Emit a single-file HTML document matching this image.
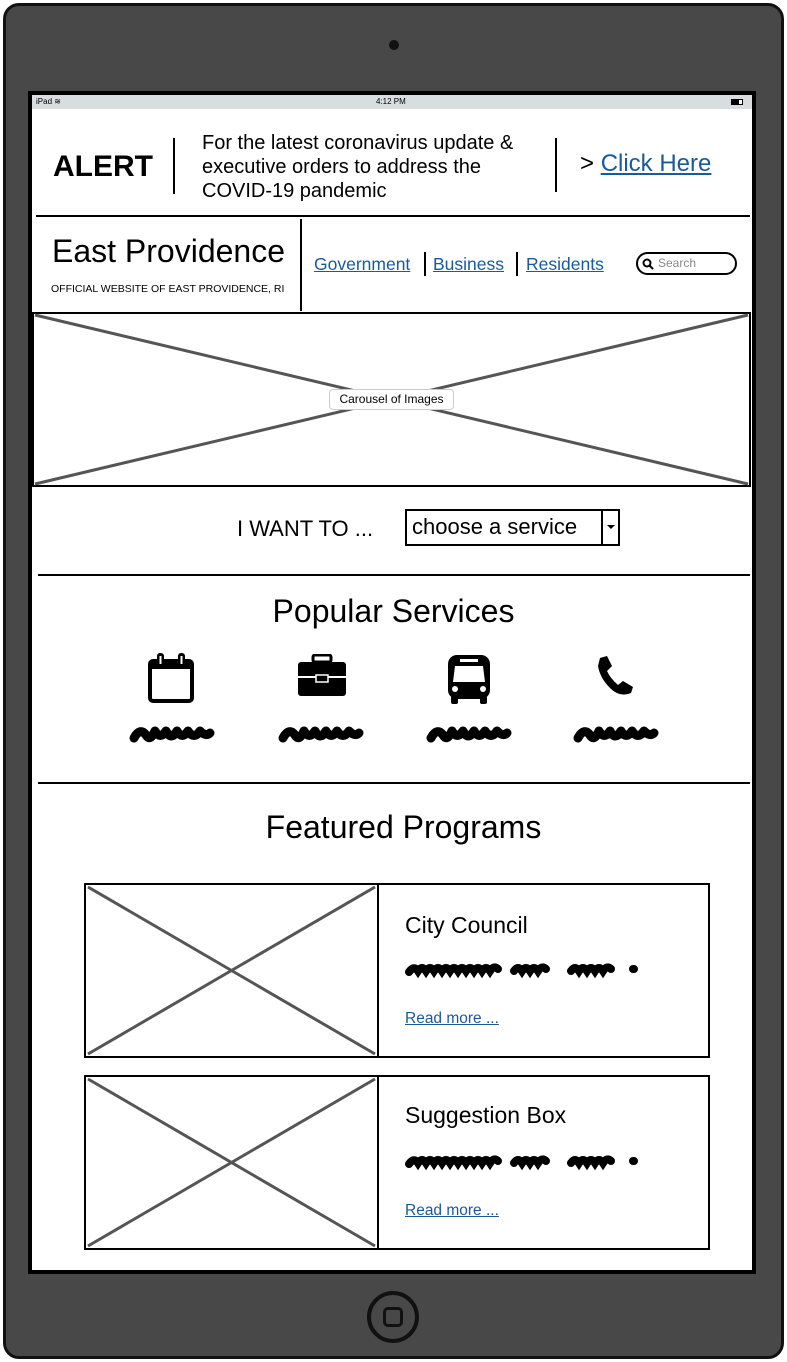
<!DOCTYPE html>
<html><head><meta charset="utf-8"><style>
*{margin:0;padding:0;box-sizing:border-box}
body{width:787px;height:1362px;background:#fff;position:relative;overflow:hidden;font-family:"Liberation Sans",sans-serif;color:#000}
.a{position:absolute}
.lk{color:#1a5a9a;text-decoration:underline}
</style></head><body>
<div class="a" style="left:3px;top:3px;width:781px;height:1356px;background:#484848;border:3px solid #111;border-radius:16px"></div>
<div class="a" style="left:389px;top:40px;width:10px;height:10px;border-radius:50%;background:#111"></div>
<div class="a" style="left:367px;top:1291px;width:52px;height:52px;border-radius:50%;border:4px solid #111"></div>
<div class="a" style="left:383px;top:1307px;width:20px;height:20px;border-radius:5px;border:3px solid #111"></div>
<div class="a" style="left:28px;top:91px;width:728px;height:1183px;background:#000"></div>
<div class="a" style="left:32px;top:95px;width:720px;height:1175px;background:#fff"></div>
<div class="a" style="left:32px;top:95px;width:720px;height:14px;background:#d8dde0;font-size:8px;line-height:14px">
 <span class="a" style="left:4px">iPad ≋</span><span class="a" style="left:344px">4:12 PM</span>
 <span class="a" style="left:699px;top:4px;width:12px;height:6px;border:1px solid #000;background:linear-gradient(90deg,#000 70%,#fff 70%)"></span></div>
<div class="a" style="left:53px;top:150px;font-size:30px;font-weight:bold">ALERT</div>
<div class="a" style="left:173px;top:138px;width:2px;height:56px;background:#000"></div>
<div class="a" style="left:202px;top:131px;font-size:20px;line-height:24px">For the latest coronavirus update &amp;<br>executive orders to address the<br>COVID-19 pandemic</div>
<div class="a" style="left:555px;top:138px;width:2px;height:54px;background:#000"></div>
<div class="a" style="left:580px;top:150px;font-size:24px">&gt; <span class="lk">Click Here</span></div>
<div class="a" style="left:36px;top:215px;width:714px;height:2px;background:#000"></div>
<div class="a" style="left:52px;top:233px;font-size:32px">East Providence</div>
<div class="a" style="left:51px;top:283px;font-size:10.5px">OFFICIAL WEBSITE OF EAST PROVIDENCE, RI</div>
<div class="a" style="left:300px;top:219px;width:2px;height:92px;background:#000"></div>
<div class="a" style="left:314px;top:254px;font-size:17.5px"><span class="lk">Government</span></div>
<div class="a" style="left:424px;top:252px;width:2px;height:24px;background:#000"></div>
<div class="a" style="left:433px;top:254px;font-size:17.5px"><span class="lk">Business</span></div>
<div class="a" style="left:516px;top:252px;width:2px;height:24px;background:#000"></div>
<div class="a" style="left:526px;top:254px;font-size:17.5px"><span class="lk">Residents</span></div>
<div class="a" style="left:636px;top:252px;width:101px;height:23px;border:2px solid #000;border-radius:12px;font-size:12px;color:#888;line-height:19px;padding-left:20px">Search</div>
<svg class="a" style="left:642px;top:258px" width="12" height="12"><circle cx="5" cy="5" r="3.5" fill="none" stroke="#000" stroke-width="2"/><path d="M7.5 7.5L11 11" stroke="#000" stroke-width="2"/></svg>
<svg class="a" style="left:32px;top:312px" width="720" height="175"><rect x="1" y="1" width="717" height="173" fill="#fff" stroke="#000" stroke-width="2"/><path d="M3 3L716 172M3 172L716 3" stroke="#555" stroke-width="3"/></svg>
<div class="a" style="left:329px;top:389px;width:125px;height:21px;background:#fff;border:1px solid #ccc;border-radius:4px;font-size:12px;line-height:19px;text-align:center">Carousel of Images</div>
<div class="a" style="left:237px;top:516px;font-size:22px">I WANT TO ...</div>
<div class="a" style="left:405px;top:509px;width:215px;height:37px;border:2px solid #000;font-size:22px;line-height:32px;padding-left:5px">choose a service</div>
<div class="a" style="left:601px;top:509px;width:2px;height:37px;background:#000"></div>
<div class="a" style="left:607px;top:525px;border:4px solid transparent;border-top:4px solid #000"></div>
<div class="a" style="left:38px;top:574px;width:712px;height:2px;background:#000"></div>
<div class="a" style="left:0;width:787px;top:593px;text-align:center;font-size:32px">Popular Services</div>
<svg class="a" style="left:147px;top:652px" width="48" height="52"><rect x="3" y="9" width="42" height="40" rx="3" fill="none" stroke="#000" stroke-width="4"/><rect x="3" y="9" width="42" height="8" fill="#000"/><rect x="10" y="1" width="7" height="14" rx="3" fill="#000"/><rect x="12.5" y="4" width="2" height="8" fill="#fff"/><rect x="31" y="1" width="7" height="14" rx="3" fill="#000"/><rect x="33.5" y="4" width="2" height="8" fill="#fff"/></svg>
<svg class="a" style="left:297px;top:654px" width="50" height="44"><rect x="16" y="1" width="18" height="7" rx="2" fill="none" stroke="#000" stroke-width="3"/><rect x="1" y="8" width="48" height="34" rx="3" fill="#000"/><path d="M1 23H49" stroke="#fff" stroke-width="2"/><rect x="19" y="21" width="12" height="7" fill="#000" stroke="#fff" stroke-width="1.5"/></svg>
<svg class="a" style="left:446px;top:654px" width="46" height="50"><rect x="2" y="1" width="42" height="44" rx="9" fill="#000"/><rect x="5" y="42" width="7" height="8" rx="2" fill="#000"/><rect x="34" y="42" width="7" height="8" rx="2" fill="#000"/><path d="M9 12H37L39 28H7Z" fill="#fff"/><rect x="14" y="5" width="18" height="3" fill="#fff"/><circle cx="9" cy="35" r="3" fill="#fff"/><circle cx="37" cy="35" r="3" fill="#fff"/></svg>
<svg class="a" style="left:596px;top:656px" width="40" height="42"><path d="M4 2 L11 0 L16 10 L11 15 Q14 22 22 29 L27 25 L37 31 L35 37 Q24 42 14 32 Q4 22 2 10 Z" fill="#000"/></svg>
<svg class="a" style="left:0;top:715px" width="787" height="30">
<g fill="none" stroke="#000" stroke-width="9" stroke-linecap="round" stroke-linejoin="round">
<path d="M134 23 Q140 12 146 20 Q150 27 155 16 Q160 25 166 16 Q171 26 177 16 Q182 25 188 16 Q194 25 200 16 Q206 22 210 18"/>
<path d="M283 23 Q289 12 295 20 Q299 27 304 16 Q309 25 315 16 Q320 26 326 16 Q331 25 337 16 Q343 25 349 16 Q355 22 359 18"/>
<path d="M431 23 Q437 12 443 20 Q447 27 452 16 Q457 25 463 16 Q468 26 474 16 Q479 25 485 16 Q491 25 497 16 Q503 22 507 18"/>
<path d="M578 23 Q584 12 590 20 Q594 27 599 16 Q604 25 610 16 Q615 26 621 16 Q626 25 632 16 Q638 25 644 16 Q650 22 654 18"/>
</g></svg>
<div class="a" style="left:38px;top:782px;width:712px;height:2px;background:#000"></div>
<div class="a" style="left:0;width:807px;top:809px;text-align:center;font-size:32px">Featured Programs</div>
<svg class="a" style="left:84px;top:883px" width="628" height="372">
<g fill="#fff" stroke="#000" stroke-width="2">
<rect x="1" y="1" width="293" height="173"/><rect x="294" y="1" width="331" height="173"/>
<rect x="1" y="193" width="293" height="173"/><rect x="294" y="193" width="331" height="173"/></g>
<path d="M4 4L291 171M4 171L291 4M4 196L291 363M4 363L291 196" stroke="#555" stroke-width="3"/>
<g fill="none" stroke="#000" stroke-width="8" stroke-linecap="round">
<path d="M325 89 Q330 82 334 88 Q338 82 342 88 Q346 82 350 88 Q354 82 358 88 Q362 82 366 88 Q370 82 374 88 Q378 82 382 88 Q386 82 390 88 Q394 82 398 88 Q402 82 406 88 Q410 82 414 86 M430 88 Q434 82 438 88 Q442 82 446 88 Q450 82 454 88 Q458 82 462 86 M487 88 Q491 82 495 88 Q499 82 503 88 Q507 82 511 88 Q515 82 519 88 Q523 82 527 86 M549 86 L550 86"/>
<path d="M325 281 Q330 274 334 280 Q338 274 342 280 Q346 274 350 280 Q354 274 358 280 Q362 274 366 280 Q370 274 374 280 Q378 274 382 280 Q386 274 390 280 Q394 274 398 280 Q402 274 406 280 Q410 274 414 278 M430 280 Q434 274 438 280 Q442 274 446 280 Q450 274 454 280 Q458 274 462 278 M487 280 Q491 274 495 280 Q499 274 503 280 Q507 274 511 280 Q515 274 519 280 Q523 274 527 278 M549 278 L550 278"/>
</g></svg>
<div class="a" style="left:405px;top:912px;font-size:23px">City Council</div>
<div class="a" style="left:405px;top:1010px;font-size:15.5px"><span class="lk">Read more ...</span></div>
<div class="a" style="left:405px;top:1102px;font-size:23px">Suggestion Box</div>
<div class="a" style="left:405px;top:1202px;font-size:15.5px"><span class="lk">Read more ...</span></div>
</body></html>
